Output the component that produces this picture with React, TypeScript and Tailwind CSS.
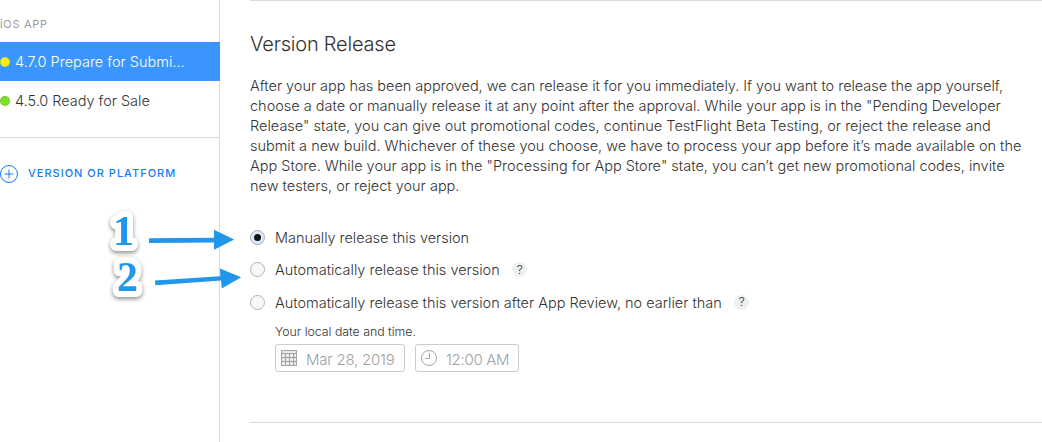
import type { ReactNode } from "react";

interface VersionItemProps {
  label: string;
  dot: string;
  tracking: string;
  active?: boolean;
}

interface ReleaseOptionProps {
  children: ReactNode;
  tracking: string;
  checked?: boolean;
  help?: boolean;
}

const description = [
  {
    text: "After your app has been approved, we can release it for you immediately. If you want to release the app yourself,",
    tracking: "tracking-[-0.04px]",
  },
  {
    text: "choose a date or manually release it at any point after the approval. While your app is in the \"Pending Developer",
    tracking: "tracking-[-0.01px]",
  },
  {
    text: "Release\" state, you can give out promotional codes, continue TestFlight Beta Testing, or reject the release and",
    tracking: "tracking-[0.01px]",
  },
  {
    text: "submit a new build. Whichever of these you choose, we have to process your app before it’s made available on the",
    tracking: "tracking-[-0.01px]",
  },
  {
    text: "App Store. While your app is in the \"Processing for App Store\" state, you can’t get new promotional codes, invite",
    tracking: "tracking-normal",
  },
  { text: "new testers, or reject your app.", tracking: "tracking-normal" },
];

function VersionItem({ label, dot, tracking, active = false }: VersionItemProps) {
  return (
    <a
      className={
        active
          ? "-mr-px flex h-[39px] items-center bg-[#3b95ff] text-white"
          : "flex h-[39px] items-center text-[#333]"
      }
    >
      <span
        className={`size-2.5 shrink-0 rounded-full border border-black/10 ${dot}`}
      />
      <span
        className={`ml-[5px] whitespace-nowrap text-[14.5px] ${tracking}`}
      >
        {label}
      </span>
    </a>
  );
}

function HelpBadge() {
  return (
    <span className="ml-[12.5px] flex size-[15px] items-center justify-center rounded-full bg-[#f0f0f0] text-[12px] text-[#333]">
      ?
    </span>
  );
}

function ReleaseOption({
  children,
  tracking,
  checked = false,
  help = false,
}: ReleaseOptionProps) {
  return (
    <label className="flex h-[32.5px] items-center">
      <span
        className={
          checked
            ? "flex size-[15px] items-center justify-center rounded-full border border-[#a9adb2] bg-[#d9e9fa]"
            : "flex size-[15px] items-center justify-center rounded-full border border-[#b2b2b2] bg-[#f8f8f8]"
        }
      >
        {checked && <span className="size-[7px] rounded-full bg-[#111]" />}
      </span>
      <span
        className={`ml-[10px] whitespace-nowrap pt-px text-[14.5px] ${tracking}`}
      >
        {children}
      </span>
      {help && <HelpBadge />}
    </label>
  );
}

function CalendarIcon() {
  return (
    <svg width="16" height="16" viewBox="0 0 16 16" fill="none" stroke="#a6a6a6">
      <path d="M.5.5h15v15H.5zM0 3.5h16" strokeWidth="1.3" />
      <path d="M0 7.5h16M0 11.5h16M4.5 4v12M8.5 4v12M12.5 4v12" strokeWidth="1.3" />
    </svg>
  );
}

function ClockIcon() {
  return (
    <svg width="16" height="16" viewBox="0 0 16 16" fill="none" stroke="#a6a6a6">
      <circle cx="8" cy="8" r="7.5" />
      <path d="M8.5 3v5.5H4" />
    </svg>
  );
}

function Annotations() {
  return (
    <svg
      className="pointer-events-none absolute left-0 top-0"
      width="260"
      height="310"
      viewBox="0 0 260 310"
      fill="#2196ea"
    >
      <g
        className="[filter:drop-shadow(0_2px_2px_rgba(0,0,0,0.45))]"
        fontFamily="Liberation Serif, serif"
        fontSize="42"
        fontWeight="700"
      >
        <g stroke="#fff" fill="#fff" strokeWidth="12" strokeLinejoin="round">
          <text x="113" y="245">1</text>
          <text x="117" y="290.7">2</text>
        </g>
        <text x="113" y="245">1</text>
        <text x="117" y="290.7">2</text>
      </g>
      <path d="M149 238.2 214 237.7V229.8L234.2 239.6 214 249.8V242.4L149 242.9z" />
      <path d="M155 280.6 220.3 276.2 220 268.6 241.2 277.3 221.8 288.4 221 280.6 155.4 285.2z" />
    </svg>
  );
}

function App() {
  return (
    <div className="relative flex h-[442px] w-[1042px] overflow-hidden bg-white font-['Inter','Liberation_Sans',sans-serif] font-light text-[#333]">
      <aside className="w-[220px] shrink-0 border-r border-[#d9d9d9]">
        <h2 className="flex h-[42px] items-center pt-[6px] text-[11px] font-normal tracking-[0.7px] text-[#9b9b9b]">
          iOS APP
        </h2>
        <nav>
          <VersionItem
            active
            label="4.7.0 Prepare for Submi..."
            dot="bg-[#fcec1e]"
            tracking="tracking-normal"
          />
          <VersionItem
            label="4.5.0 Ready for Sale"
            dot="bg-[#7fe02c]"
            tracking="tracking-[-0.03px]"
          />
        </nav>
        <button className="mt-[17px] flex h-[72px] w-full items-center border-t border-[#d9d9d9] text-[11px] font-medium tracking-[1px] text-[#147bf5]">
          <svg
            width="18"
            height="18"
            viewBox="0 0 18 18"
            fill="none"
            stroke="currentColor"
          >
            <circle cx="9" cy="9" r="8.5" />
            <path d="M9 4.5v9M4.5 9h9" />
          </svg>
          <span className="ml-2.5 whitespace-nowrap">VERSION OR PLATFORM</span>
        </button>
      </aside>

      <main className="ml-[30px] min-w-0 flex-1">
        <section className="h-[423px] border-y border-[#d9d9d9]">
          <h1 className="pt-[29px] text-[20px] leading-[28px] tracking-[-0.2px]">
            Version Release
          </h1>
          <p className="mt-[18px] whitespace-nowrap text-[14.5px] leading-[20px]">
            {description.map((line) => (
              <span key={line.text} className={`block w-fit ${line.tracking}`}>
                {line.text}
              </span>
            ))}
          </p>
          <div className="mt-[25px]">
            <ReleaseOption checked tracking="tracking-[-0.05px]">
              Manually release this version
            </ReleaseOption>
            <ReleaseOption help tracking="tracking-[-0.01px]">
              Automatically release this version
            </ReleaseOption>
            <ReleaseOption help tracking="tracking-[-0.01px]">
              Automatically release this version after App Review, no earlier
              than
            </ReleaseOption>
          </div>
          <div className="ml-[25px]">
            <p className="mt-[5px] text-[12.3px] font-light leading-[16px]">
              Your local date and time.
            </p>
            <div className="mt-[4px] flex gap-[10px] text-[15px] text-[#a0a0a0]">
              <div className="flex h-[28px] w-[130px] items-center rounded-[3px] border border-[#ccc] pl-[5px]">
                <CalendarIcon />
                <span className="ml-[9px] whitespace-nowrap pt-[5px] tracking-[-0.22px]">
                  Mar 28, 2019
                </span>
              </div>
              <div className="flex h-[28px] w-[104px] items-center rounded-[3px] border border-[#ccc] pl-[5px]">
                <ClockIcon />
                <span className="ml-[9px] whitespace-nowrap pt-[5px] tracking-[-0.3px]">
                  12:00 AM
                </span>
              </div>
            </div>
          </div>
        </section>
      </main>

      <Annotations />
    </div>
  );
}

export default App;
